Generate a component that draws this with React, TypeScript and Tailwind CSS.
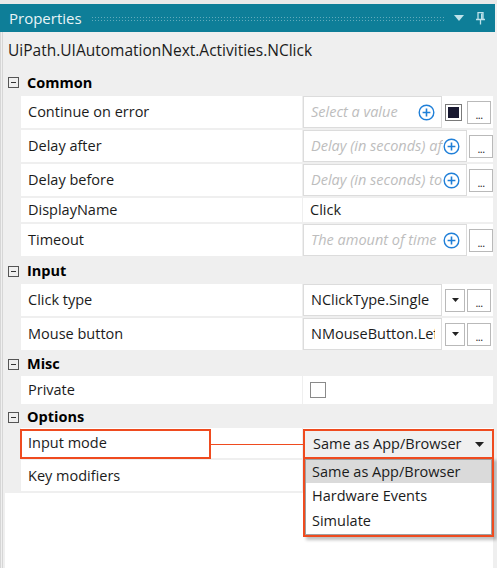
import React from 'react';

const font = "font-['Open_Sans',sans-serif]";

function PlusIcon() {
  return (
    <svg width="17" height="17" viewBox="0 0 17 17" className="shrink-0">
      <circle cx="8.5" cy="8.5" r="7.3" fill="white" stroke="#1f7fd8" strokeWidth="1.4" />
      <path d="M8.5 4.6v7.8M4.6 8.5h7.8" stroke="#1f7fd8" strokeWidth="1.6" />
    </svg>
  );
}

function MoreBtn() {
  return (
    <div className="w-[24px] h-[23px] border border-[#b9b9b9] bg-white flex items-end justify-center pb-[3px] shrink-0">
      <span className="text-[11px] leading-none text-[#222] tracking-[-0.5px]">...</span>
    </div>
  );
}

function ArrowBtn() {
  return (
    <div className="w-[20px] h-[23px] border border-[#b9b9b9] bg-white flex items-center justify-center shrink-0">
      <svg width="7" height="4" viewBox="0 0 7 4">
        <path d="M0 0h7L3.5 4z" fill="#222" />
      </svg>
    </div>
  );
}

function Category({ title, h }: { title: string; h: string }) {
  return (
    <div className={`flex items-center pl-[8px] ${h}`}>
      <div className="w-[11px] h-[11px] border border-[#555] flex items-center justify-center">
        <div className="w-[5px] h-px bg-[#333]" />
      </div>
      <span className="ml-[8px] text-[14.5px] font-bold text-black">{title}</span>
    </div>
  );
}

function Row({ label, h, children }: { label: string; h: string; children?: React.ReactNode }) {
  return (
    <div className={`flex ml-[21px] mb-[2px] ${h}`}>
      <div className="w-[281px] bg-white pl-[7px] flex items-center text-[14.5px] text-[#1b1b1b]">{label}</div>
      <div className="flex-1 bg-white ml-px flex items-center">{children}</div>
    </div>
  );
}

function Field({ w, text, italic, plus }: { w: string; text: string; italic?: boolean; plus?: boolean }) {
  return (
    <div className={`${w} h-full border border-[#dcdcdc] bg-white flex items-center pl-[7px] pr-[6px] overflow-hidden shrink-0`}>
      <span
        className={`flex-1 overflow-hidden whitespace-nowrap text-[14.5px] ${
          italic ? 'italic text-[#bdbdbd]' : 'text-[#1b1b1b]'
        }`}
      >
        {text}
      </span>
      {plus && <PlusIcon />}
    </div>
  );
}

export default function App() {
  return (
    <div className={`w-[497px] h-[568px] bg-[#efefef] relative overflow-hidden ${font}`}>
      <div className="h-[4px] bg-[#e9e9e9]" />
      {/* title bar */}
      <div className="h-[28px] bg-[#0e7e98] flex items-center pl-[9px] pr-[10px] mr-[2px]">
        <span className="text-[15px] text-[#e8f4f7]">Properties</span>
        <div className="flex-1 mx-[9px] h-[5px] bg-[radial-gradient(circle,rgba(255,255,255,0.35)_0.8px,transparent_1px)] bg-[length:3px_3px]" />
        <svg width="10" height="6" viewBox="0 0 10 6" className="mr-[12px]">
          <path d="M0 0h10L5 6z" fill="#bfe2ea" />
        </svg>
        <svg width="9" height="13" viewBox="0 0 9 13">
          <path d="M2 0.5h5v7H2zM0 7.5h9M4.5 7.5v5" stroke="#bfe2ea" strokeWidth="1.3" fill="none" />
          <path d="M5 1.5h1.5v5.5H5z" fill="#bfe2ea" />
        </svg>
      </div>

      {/* body with left edge */}
      <div className="flex h-[536px]">
        <div className="w-[5px] border-l border-[#d6d6d6] flex shrink-0">
          <div className="w-[2px] border-r border-[#d6d6d6]" />
        </div>
        <div className="flex-1 -ml-[5px] flex flex-col pr-[4px]">
          <div className="h-[37px] flex items-center pl-[8px] text-[15.5px] text-[#1b1b1b]">
            UiPath.UIAutomationNext.Activities.NClick
          </div>

          <Category title="Common" h="h-[27px]" />
          <Row label="Continue on error" h="h-[32px]">
            <Field w="w-[139px]" text="Select a value" italic plus />
            <div className="ml-[3px] w-[17px] h-[17px] border border-[#7a7a7a] bg-white p-[2px] shrink-0">
              <div className="w-full h-full bg-[#181830]" />
            </div>
            <div className="ml-[5px]"><MoreBtn /></div>
          </Row>
          <Row label="Delay after" h="h-[32px]">
            <Field w="w-[164px]" text="Delay (in seconds) after the activity" italic plus />
            <div className="ml-[2px]"><MoreBtn /></div>
          </Row>
          <Row label="Delay before" h="h-[32px]">
            <Field w="w-[164px]" text="Delay (in seconds) to wait" italic plus />
            <div className="ml-[2px]"><MoreBtn /></div>
          </Row>
          <Row label="DisplayName" h="h-[24px]">
            <span className="pl-[7px] text-[14.5px] text-[#1b1b1b]">Click</span>
          </Row>
          <Row label="Timeout" h="h-[32px]">
            <Field w="w-[164px]" text="The amount of time" italic plus />
            <div className="ml-[2px]"><MoreBtn /></div>
          </Row>

          <Category title="Input" h="h-[26px]" />
          <Row label="Click type" h="h-[32px]">
            <Field w="w-[139px]" text="NClickType.Single" />
            <div className="ml-[3px]"><ArrowBtn /></div>
            <div className="ml-[2px]"><MoreBtn /></div>
          </Row>
          <Row label="Mouse button" h="h-[32px]">
            <Field w="w-[139px]" text="NMouseButton.Left" />
            <div className="ml-[3px]"><ArrowBtn /></div>
            <div className="ml-[2px]"><MoreBtn /></div>
          </Row>

          <Category title="Misc" h="h-[24px]" />
          <Row label="Private" h="h-[28px]">
            <div className="ml-[7px] w-[16px] h-[16px] border border-[#8a8a8a] bg-white" />
          </Row>

          <Category title="Options" h="h-[22px]" />
          <Row label="Input mode" h="h-[30px]" />
          <Row label="Key modifiers" h="h-[31px]" />

          <div className="flex-1 bg-white ml-[5px]" />
        </div>
      </div>

      {/* annotation: label box + connector */}
      <div className="absolute left-[20px] top-[429px] w-[191px] h-[30px] border-2 border-[#ef4b1f]" />
      <div className="absolute left-[211px] top-[444px] w-[92px] h-px bg-[#ef4b1f]" />

      {/* open dropdown */}
      <div className="absolute left-[303px] top-[429px] w-[191px] h-[30px] border-2 border-[#ef4b1f] bg-[#f0f0f0] flex items-center pl-[8px] pr-[8px]">
        <span className="flex-1 text-[14.5px] text-[#1b1b1b]">Same as App/Browser</span>
        <svg width="9" height="5" viewBox="0 0 9 5">
          <path d="M0 0h9L4.5 5z" fill="#222" />
        </svg>
      </div>
      <div className="absolute left-[303px] top-[457px] w-[191px] h-[80px] border-2 border-[#ef4b1f] bg-white shadow-[3px_3px_3px_rgba(0,0,0,0.25)]">
        <div className="border border-[#a0a0a0] h-full flex flex-col">
          <div className="h-[23px] bg-[#dadada] flex items-center pl-[6px] text-[14.5px] text-[#1b1b1b]">Same as App/Browser</div>
          <div className="h-[25px] flex items-center pl-[6px] text-[14.5px] text-[#1b1b1b]">Hardware Events</div>
          <div className="h-[25px] flex items-center pl-[6px] text-[14.5px] text-[#1b1b1b]">Simulate</div>
        </div>
      </div>
    </div>
  );
}
